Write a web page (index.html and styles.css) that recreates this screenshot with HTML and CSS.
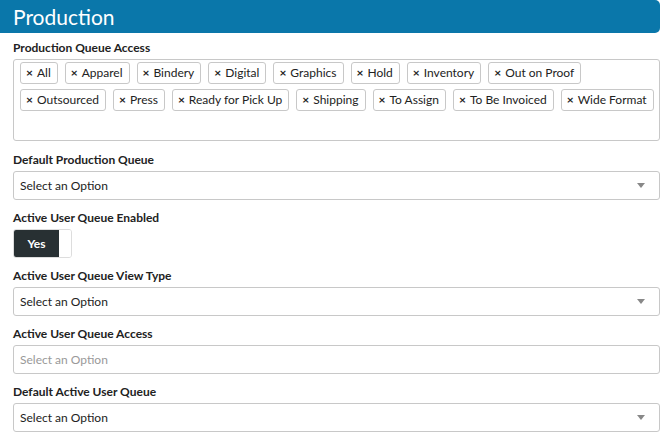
FILE: index.html
```html
<!DOCTYPE html>
<html>
<head>
<meta charset="utf-8">
<link rel="stylesheet" href="styles.css">
</head>
<body>
<div class="page">
  <div class="header">Production</div>
  <div class="form">
    <div class="field first">
      <div class="label">Production Queue Access</div>
      <div class="tagbox">
        <span class="tag"><span class="x">×</span>All</span>
        <span class="tag"><span class="x">×</span>Apparel</span>
        <span class="tag"><span class="x">×</span>Bindery</span>
        <span class="tag"><span class="x">×</span>Digital</span>
        <span class="tag"><span class="x">×</span>Graphics</span>
        <span class="tag"><span class="x">×</span>Hold</span>
        <span class="tag"><span class="x">×</span>Inventory</span>
        <span class="tag"><span class="x">×</span>Out on Proof</span>
        <span class="tag"><span class="x">×</span>Outsourced</span>
        <span class="tag"><span class="x">×</span>Press</span>
        <span class="tag"><span class="x">×</span>Ready for Pick Up</span>
        <span class="tag"><span class="x">×</span>Shipping</span>
        <span class="tag"><span class="x">×</span>To Assign</span>
        <span class="tag"><span class="x">×</span>To Be Invoiced</span>
        <span class="tag"><span class="x">×</span>Wide Format</span>
      </div>
    </div>
    <div class="field">
      <div class="label">Default Production Queue</div>
      <div class="select"><span>Select an Option</span><span class="caret"></span></div>
    </div>
    <div class="field">
      <div class="label">Active User Queue Enabled</div>
      <div class="toggle"><span class="on">Yes</span><span class="off"></span></div>
    </div>
    <div class="field">
      <div class="label">Active User Queue View Type</div>
      <div class="select"><span>Select an Option</span><span class="caret"></span></div>
    </div>
    <div class="field">
      <div class="label">Active User Queue Access</div>
      <div class="select placeholder"><span>Select an Option</span></div>
    </div>
    <div class="field">
      <div class="label">Default Active User Queue</div>
      <div class="select"><span>Select an Option</span><span class="caret"></span></div>
    </div>
  </div>
</div>
</body>
</html>
```

FILE: styles.css
```css
html, body {
  margin: 0;
  padding: 0;
  background: #fff;
}
body {
  font-family: Lato, "Open Sans", sans-serif;
  color: #222;
  font-size: 12px;
}
.page {
  width: 660px;
}
.header {
  background: #0a77aa;
  color: #fff;
  height: 33px;
  line-height: 34px;
  font-size: 21px;
  padding-left: 13px;
  border-bottom-right-radius: 5px;
  border-top-right-radius: 5px;
}
.form {
  padding: 6px 0 0 13px;
}
.field {
  margin-bottom: 9px;
}
.field.first {
  margin-bottom: 10px;
}
.label {
  font-weight: bold;
  font-size: 12px;
  line-height: 16px;
  padding-top: 1px;
  margin-bottom: 3px;
}
.tagbox {
  border: 1px solid #c8c8c8;
  border-radius: 3px;
  box-sizing: border-box;
  height: 82px;
  padding: 2px 2px 0 6px;
  display: flex;
  flex-wrap: wrap;
  align-content: flex-start;
  column-gap: 7px;
  row-gap: 5px;
}
.tag {
  border: 1px solid #c8c8c8;
  border-radius: 3px;
  height: 22px;
  box-sizing: border-box;
  line-height: 20px;
  padding: 0 6px 0 5px;
  font-size: 12px;
  white-space: nowrap;
}
.x {
  font-weight: bold;
  margin-right: 4px;
}
.select {
  border: 1px solid #c8c8c8;
  border-radius: 3px;
  height: 29px;
  box-sizing: border-box;
  display: flex;
  align-items: center;
  justify-content: space-between;
  padding: 0 14px 0 6px;
  font-size: 12px;
}
.placeholder {
  color: #999;
}
.caret {
  width: 0;
  height: 0;
  border-left: 4px solid transparent;
  border-right: 4px solid transparent;
  border-top: 5px solid #888;
}
.toggle {
  display: flex;
  width: 59px;
  height: 29px;
  box-sizing: border-box;
  border: 1px solid #ddd;
  border-radius: 3px;
  overflow: hidden;
}
.toggle .on {
  background: #283033;
  color: #fff;
  font-weight: bold;
  width: 45px;
  display: flex;
  align-items: center;
  justify-content: center;
}
.toggle .off {
  flex: 1;
  background: #fff;
}
```
